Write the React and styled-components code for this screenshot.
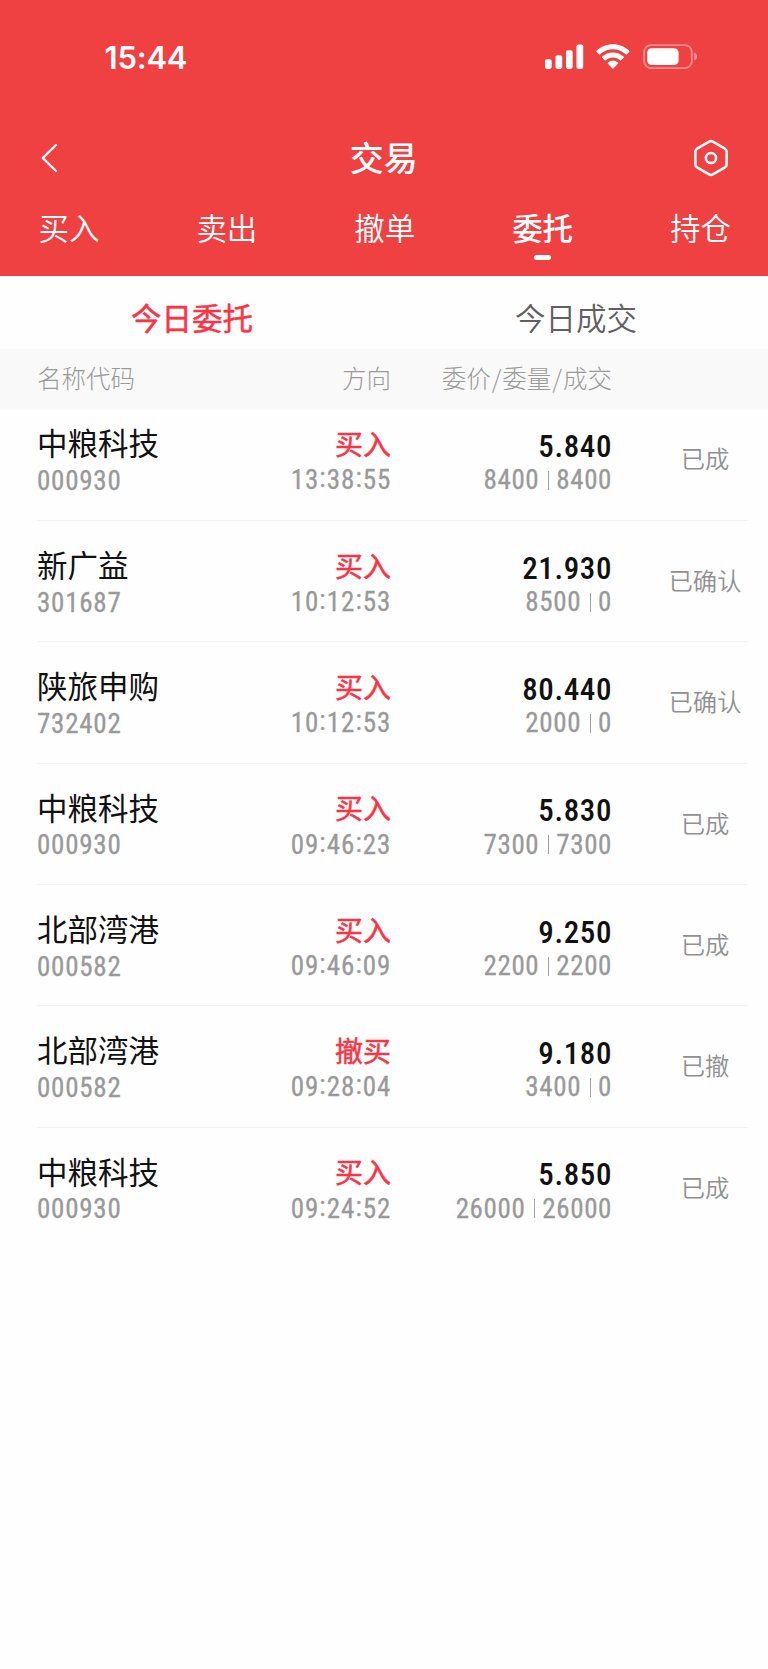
import React from 'react'
import styled, { createGlobalStyle } from 'styled-components'

const GlobalStyle = createGlobalStyle`
  * {
    box-sizing: border-box;
  }
  body {
    margin: 0;
    background: #fefefe;
    font-family: "Noto Sans CJK SC", sans-serif;
  }
`

const Page = styled.div`
  width: 768px;
  min-height: 1669px;
  background: #fefefe;
`

const Header = styled.header`
  height: 276px;
  background: #ef4042;
  color: #fff;
`

const StatusBar = styled.div`
  display: flex;
  align-items: center;
  justify-content: space-between;
  height: 114px;
  padding: 0 71px 0 104.5px;
`

const Clock = styled.span`
  padding-top: 1px;
  font-family: Inter, sans-serif;
  font-size: 31px;
  font-weight: 600;
  line-height: 40px;
  letter-spacing: -0.2px;
`

const Signals = styled.div`
  display: flex;
  align-items: center;
`

const NavBar = styled.div`
  display: grid;
  grid-template-columns: 80px 1fr 80px;
  align-items: center;
  height: 87px;
  padding: 0 39.5px 0 40px;

  svg:last-child {
    justify-self: end;
  }
`

const Title = styled.h1`
  margin: 0;
  padding: 0 1px 2px 0;
  font-size: 34px;
  font-weight: 500;
  line-height: 48px;
  text-align: center;
`

const MainTabs = styled.nav`
  display: flex;
  justify-content: space-between;
  padding: 4px 37px 0 38.5px;
`

const MainTab = styled.div`
  display: flex;
  flex-direction: column;
  align-items: center;
  font-size: 30.5px;
  font-weight: ${({ $active }) => ($active ? 500 : 350)};
  line-height: 44px;

  &::after {
    content: '';
    width: 17px;
    height: 5px;
    margin-top: 6px;
    border-radius: 3px;
    background: ${({ $active }) => ($active ? '#fff' : 'transparent')};
  }
`

const SubTabs = styled.div`
  display: grid;
  grid-template-columns: 1fr 1fr;
  height: 73px;
  padding-top: 19px;
`

const SubTab = styled.div`
  font-size: 30.5px;
  font-weight: ${({ $active }) => ($active ? 400 : 350)};
  -webkit-text-stroke: ${({ $active }) => ($active ? '0.5px #fb3345' : '0')};
  line-height: 44px;
  text-align: center;
  color: ${({ $active }) => ($active ? '#fb3345' : '#606060')};
`

const Columns = styled.div`
  display: grid;
  grid-template-columns: 190px 164px 221px 1fr;
`

const TableHead = styled(Columns)`
  height: 61px;
  padding: 0 20px 0 37px;
  background: #f9f9f9;
  color: #999;
  font-size: 24.5px;
  font-weight: 300;
  line-height: 57px;
`

const HeadCell = styled.span`
  text-align: ${({ $right }) => ($right ? 'right' : 'left')};
  white-space: nowrap;
`

const Slash = styled.span`
  margin: 0 1px;
`

const List = styled.div`
  padding: 0 20px 0 37px;
`

const Row = styled(Columns)`
  height: 121.35px;
  padding-top: 22px;
  border-bottom: 1px solid #f3f3f3;

  &:first-child {
    height: 111px;
    padding-top: 11px;
  }
  &:last-child {
    border-bottom: none;
  }
`

const Cell = styled.div`
  text-align: ${({ $right }) => ($right ? 'right' : 'left')};
  white-space: nowrap;
`

const Name = styled.div`
  margin-top: -1px;
  font-size: 30.5px;
  font-weight: 400;
  line-height: 44px;
  color: #111;
`

const Side = styled.div`
  margin-top: -0.5px;
  font-size: 28px;
  font-weight: 400;
  -webkit-text-stroke: 0.5px #fb3345;
  line-height: 44px;
  color: #fb3345;
`

const Price = styled.div`
  padding-top: 3.5px;
  font-family: Roboto, sans-serif;
  font-stretch: 85%;
  font-size: 31px;
  font-weight: 500;
  line-height: 44px;
  letter-spacing: 0.6px;
  color: #111;
`

const Digits = styled.div`
  display: flex;
  justify-content: ${({ $right }) => ($right ? 'flex-end' : 'flex-start')};
  align-items: center;
  margin-top: ${({ $top }) => $top || 0}px;
  font-family: Roboto, sans-serif;
  font-stretch: 85%;
  font-size: 27px;
  font-weight: 400;
  -webkit-text-stroke: 0.3px #999;
  line-height: 30px;
  letter-spacing: ${({ $spacing }) => $spacing || 0.75}px;
  color: #999;
`

const Colon = styled.span`
  margin: 0 0.4px;
  line-height: 0;
  vertical-align: 2px;
`

const Bar = styled.i`
  width: 1px;
  height: 19px;
  margin: 0 7.5px 0 8.5px;
  background: #a0a0a0;
`

const State = styled.div`
  width: 128px;
  padding-top: 15px;
  margin-left: 29px;
  text-align: center;
  font-size: 24.3px;
  font-weight: 350;
  line-height: 44px;
  color: #909090;
`

const mainTabs = ['买入', '卖出', '撤单', '委托', '持仓']

const orders = [
  { name: '中粮科技', code: '000930', side: '买入', time: '13:38:55', price: '5.840', qty: '8400', done: '8400', state: '已成' },
  { name: '新广益', code: '301687', side: '买入', time: '10:12:53', price: '21.930', qty: '8500', done: '0', state: '已确认' },
  { name: '陕旅申购', code: '732402', side: '买入', time: '10:12:53', price: '80.440', qty: '2000', done: '0', state: '已确认' },
  { name: '中粮科技', code: '000930', side: '买入', time: '09:46:23', price: '5.830', qty: '7300', done: '7300', state: '已成' },
  { name: '北部湾港', code: '000582', side: '买入', time: '09:46:09', price: '9.250', qty: '2200', done: '2200', state: '已成' },
  { name: '北部湾港', code: '000582', side: '撤买', time: '09:28:04', price: '9.180', qty: '3400', done: '0', state: '已撤' },
  { name: '中粮科技', code: '000930', side: '买入', time: '09:24:52', price: '5.850', qty: '26000', done: '26000', state: '已成' },
]

const SignalIcons = () => (
  <svg width="153" height="26" viewBox="-0.3 0.6 153 26" fill="#fff">
    <rect x="0.7" y="15.9" width="6.7" height="9.6" rx="1.8" />
    <rect x="11.2" y="11.9" width="6.7" height="13.6" rx="1.8" />
    <rect x="21.7" y="6.8" width="6.7" height="18.7" rx="1.8" />
    <rect x="32.2" y="1" width="6.7" height="24.5" rx="1.8" />
    <path d="M68.6 0.9c-6.3 0-12 2.4-16.3 6.4-.4.4-.4.9 0 1.3l2.3 2.3c.3.3.8.3 1.2 0 3.4-3.1 7.9-5 12.8-5s9.4 1.9 12.8 5c.4.3.9.3 1.2 0l2.3-2.3c.4-.4.4-.9 0-1.3-4.3-4-10-6.4-16.3-6.4z" />
    <path d="M68.6 9c-4.1 0-7.9 1.6-10.7 4.1-.4.4-.4.9 0 1.3l2.5 2.4c.3.3.8.3 1.2 0 1.9-1.7 4.3-2.7 7-2.7s5.1 1 7 2.7c.4.3.9.3 1.2 0l2.5-2.4c.4-.4.4-.9 0-1.3-2.8-2.5-6.6-4.1-10.7-4.1z" />
    <path d="M68.6 17.4c-1.9 0-3.6.6-4.9 1.7-.5.4-.5.9-.1 1.3l4.3 4.5c.4.4 1 .4 1.4 0l4.3-4.5c.4-.4.4-.9-.1-1.3-1.3-1.1-3-1.7-4.9-1.7z" />
    <rect x="99.8" y="1.7" width="47.7" height="23" rx="7" fill="none" stroke="#fff" strokeOpacity="0.4" strokeWidth="1.9" />
    <rect x="102.9" y="4.9" width="31.4" height="16.7" rx="4.5" />
    <path d="M150 9.2c1.7.7 2.7 2.2 2.7 4s-1 3.3-2.7 4z" fillOpacity="0.5" />
  </svg>
)

const BackIcon = () => (
  <svg width="19" height="30" viewBox="0 0 19 30" fill="none" stroke="#fff" strokeWidth="2.4" strokeLinecap="round" strokeLinejoin="round">
    <path d="M16 2L2.7 15L16 28" />
  </svg>
)

const SettingIcon = () => (
  <svg width="36" height="38" viewBox="0 0 36 38" fill="none" stroke="#fff" strokeWidth="2.5" strokeLinejoin="round">
    <path d="M16.2 2.6Q18 1.6 19.8 2.6L32 9.7Q33.6 10.7 33.6 12.6V25.4Q33.6 27.3 32 28.3L19.8 35.4Q18 36.4 16.2 35.4L4 28.3Q2.4 27.3 2.4 25.4V12.6Q2.4 10.7 4 9.7Z" />
    <circle cx="18" cy="19" r="5.1" />
  </svg>
)

const Time = ({ value }) => {
  const [h, m, s] = value.split(':')
  return <span>{h}<Colon>:</Colon>{m}<Colon>:</Colon>{s}</span>
}

const App = () => {
  return (
    <Page>
      <GlobalStyle />
      <Header>
        <StatusBar>
          <Clock>15:44</Clock>
          <Signals><SignalIcons /></Signals>
        </StatusBar>
        <NavBar>
          <BackIcon />
          <Title>交易</Title>
          <SettingIcon />
        </NavBar>
        <MainTabs>
          {mainTabs.map((t) => <MainTab key={t} $active={t === '委托'}>{t}</MainTab>)}
        </MainTabs>
      </Header>

      <SubTabs>
        <SubTab $active>今日委托</SubTab>
        <SubTab>今日成交</SubTab>
      </SubTabs>

      <TableHead>
        <HeadCell>名称代码</HeadCell>
        <HeadCell $right>方向</HeadCell>
        <HeadCell $right>委价<Slash>/</Slash>委量<Slash>/</Slash>成交</HeadCell>
      </TableHead>

      <List>
        {orders.map((o) => (
          <Row key={o.time + o.code}>
            <Cell>
              <Name>{o.name}</Name>
              <Digits $top={1.5}>{o.code}</Digits>
            </Cell>
            <Cell $right>
              <Side>{o.side}</Side>
              <Digits $right $top={0.5}><Time value={o.time} /></Digits>
            </Cell>
            <Cell $right>
              <Price>{o.price}</Price>
              <Digits $right $top={-3.5} $spacing={0.6}>{o.qty}<Bar />{o.done}</Digits>
            </Cell>
            <State>{o.state}</State>
          </Row>
        ))}
      </List>
    </Page>
  )
}

export default App
